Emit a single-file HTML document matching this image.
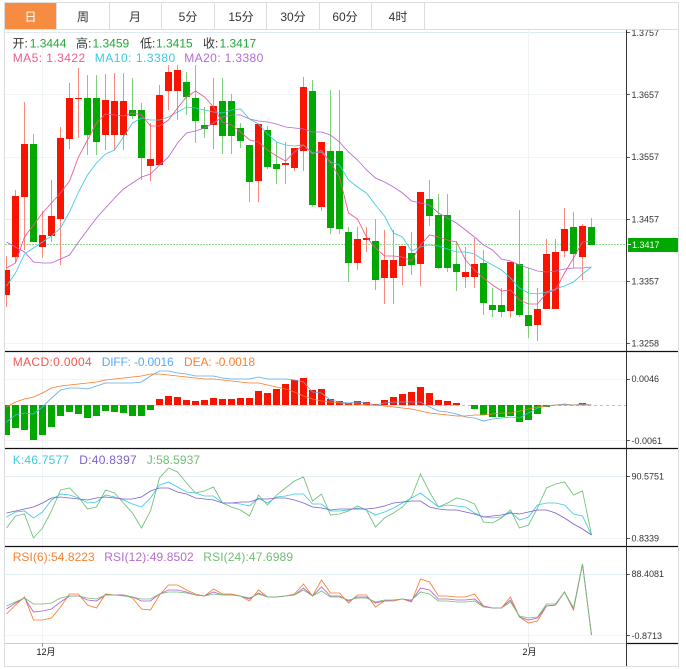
<!DOCTYPE html>
<html><head><meta charset="utf-8"><style>
html,body{margin:0;padding:0;background:#fff;width:686px;height:669px;overflow:hidden}
svg{position:absolute;left:0;top:0;display:block}
text{font-family:"Liberation Sans","Noto Sans CJK SC",sans-serif}
.l{font-size:12px}.a{font-size:9px;fill:#333}
.t{font-size:12px;fill:#333;text-anchor:middle}
polyline{stroke-width:.85}
</style></head><body>
<svg width="686" height="669" viewBox="0 0 686 669" fill="none">
<defs><clipPath id="p"><rect x="5" y="30" width="622" height="320"/></clipPath></defs>
<!-- grid -->
<path d="M5 32.5H626" stroke="#dfeaf1"/>
<path d="M5 94.5H626M5 157.5H626M5 343.5H626M5 379.5H626M5 440.5H626M5 538.5H626M5 635.5H626" stroke="#f0f4f6"/>
<path d="M5 219.5H626M5 281.5H626M5 476.5H626M5 574.5H626" stroke="#e4edf2"/>
<path d="M42.5 30V643M528.5 30V643" stroke="#eef3f5"/>
<path d="M5 405.5H456" stroke="#d8dcdf"/>
<path d="M408 405.5H626" stroke="#9fcbe0" stroke-dasharray="3 3"/>
<!-- current price -->
<path d="M5 244.5H626" stroke="#8fdc8f" stroke-dasharray="2 1"/>
<!-- wicks -->
<g clip-path="url(#p)">
<path stroke="#fa8a80" d="M6.5 256V307M15.5 190V263M24.5 102V250M42.5 211V258M51.5 180V242M60.5 127V265M69.5 83V149M78.5 68V138M105.5 74V150M114.5 73V150M123.5 73V150M150.5 123V181M159.5 85V165M168.5 65V110M177.5 65V120M213.5 78V149M258.5 124V202M285.5 142V184M294.5 148V171M303.5 77V171M321.5 142V211M357.5 227V270M366.5 227V252M384.5 230V304M393.5 230V304M402.5 246V285M420.5 192V286M465.5 247V288M474.5 238V288M510.5 262V318M537.5 288V341M546.5 239V309M555.5 239V309M564.5 208V257M582.5 224V280"/>
<path stroke="#7ed07e" d="M33.5 134V242M87.5 75V155M96.5 75V155M132.5 78V119M141.5 103V180M186.5 72V115M195.5 65V143M204.5 107V138M222.5 78V154M231.5 94V154M240.5 123V148M249.5 145V202M267.5 126V169M276.5 142V184M312.5 80V207M330.5 90V234M339.5 90V234M348.5 227V282M375.5 219V290M411.5 232V275M429.5 180V226M438.5 194V269M447.5 194V272M456.5 241V291M483.5 250V315M492.5 288V317M501.5 288V317M519.5 210V317M528.5 268V338M573.5 212V268M591.5 218V245"/>
<!-- bodies -->
<path fill="#f71400" d="M3 270h7v25h-7zM12 196h7v61h-7zM21 144h7v53h-7zM39 235h7v12h-7zM48 216h7v20h-7zM57 138h7v81h-7zM66 98h7v41h-7zM75 98h7v1h-7zM102 100h7v35h-7zM111 101h7v34h-7zM120 101h7v34h-7zM147 159h7v7h-7zM156 95h7v70h-7zM165 72h7v19h-7zM174 70h7v21h-7zM210 106h7v19h-7zM255 124h7v57h-7zM282 163h7v2h-7zM291 148h7v20h-7zM300 87h7v64h-7zM318 142h7v65h-7zM354 239h7v24h-7zM363 238h7v2h-7zM381 260h7v18h-7zM390 260h7v18h-7zM399 246h7v20h-7zM417 192h7v72h-7zM462 272h7v5h-7zM471 264h7v13h-7zM507 262h7v49h-7zM534 309h7v16h-7zM543 254h7v55h-7zM552 252h7v57h-7zM561 229h7v22h-7zM579 226h7v31h-7z"/>
<path fill="#00a800" d="M30 144h7v98h-7zM84 98h7v37h-7zM93 98h7v44h-7zM129 110h7v6h-7zM138 110h7v48h-7zM183 82h7v15h-7zM192 98h7v23h-7zM201 125h7v4h-7zM219 101h7v35h-7zM228 101h7v35h-7zM237 128h7v13h-7zM246 145h7v37h-7zM264 130h7v37h-7zM273 164h7v5h-7zM309 91h7v114h-7zM327 151h7v77h-7zM336 151h7v78h-7zM345 232h7v31h-7zM372 241h7v39h-7zM408 253h7v12h-7zM426 199h7v17h-7zM435 215h7v53h-7zM444 215h7v53h-7zM453 264h7v8h-7zM480 263h7v40h-7zM489 305h7v5h-7zM498 305h7v7h-7zM516 264h7v51h-7zM525 315h7v11h-7zM570 227h7v27h-7zM588 227h7v18h-7z"/>
<!-- MA lines -->
<g transform="translate(.5 0)">
<polyline stroke="#b666d2" points="6,242 15,247 24,252 33,262 42,263 51,263 60,259 69,255 78,242 87,230 96,218 105,208 114,198 123,189 132,183 141,177 150,174 159,165 168,157 177,143 186,133 195,131 204,128 213,123 222,117 231,115 240,115 249,119 258,121 267,122 276,124 285,127 294,128 303,129 312,132 321,132 330,135 339,142 348,152 357,160 366,170 375,178 384,182 393,187 402,193 411,201 420,203 429,205 438,213 447,218 456,223 465,230 474,237 483,245 492,250 501,259 510,261 519,265 528,268 537,271 546,272 555,271 564,269 573,268 582,268 591,267"/>
<polyline stroke="#3ec9e0" points="6,286 15,273 24,254 33,248 42,242 51,236 60,228 69,212 78,192 87,175 96,163 105,154 114,150 123,137 132,123 141,118 150,120 159,120 168,117 177,112 186,107 195,108 204,110 213,112 222,113 231,110 240,109 249,119 258,124 267,134 276,142 285,145 294,146 303,145 312,153 321,152 330,162 339,165 348,180 357,187 366,193 375,205 384,216 393,233 402,237 411,251 420,247 429,245 438,246 447,249 456,252 465,252 474,254 483,260 492,265 501,270 510,278 519,288 528,293 537,294 546,292 555,289 564,286 573,282 582,274 591,267"/>
<polyline stroke="#f0558a" points="6,268 15,263 24,237 33,225 42,213 51,203 60,193 69,181 78,157 87,140 96,123 105,114 114,115 123,116 132,113 141,115 150,126 159,126 168,120 177,108 186,97 195,91 204,97 213,107 222,122 231,125 240,132 249,140 258,142 267,150 276,156 285,161 294,152 303,145 312,154 321,150 330,163 339,177 348,213 357,219 366,237 375,248 384,256 393,256 402,257 411,261 420,245 429,235 438,237 447,240 456,242 465,260 474,270 483,278 492,285 501,291 510,290 519,300 528,304 537,304 546,293 555,290 564,273 573,258 582,242 591,241"/>
</g>
</g>
<!-- MACD bars -->
<path fill="#00a800" d="M5 405h5v30h-5zM12 405h7v23h-7zM21 405h7v25h-7zM30 405h7v35h-7zM39 405h7v30h-7zM48 405h7v22h-7zM57 405h7v11h-7zM66 405h7v7h-7zM75 405h7v9h-7zM84 405h7v13h-7zM93 405h7v11h-7zM102 405h7v6h-7zM111 405h7v7h-7zM120 405h7v8h-7zM129 405h7v11h-7zM138 405h7v11h-7zM147 405h7v5h-7zM471 405h7v4h-7zM480 405h7v10h-7zM489 405h7v12h-7zM498 405h7v12h-7zM507 405h7v11h-7zM516 405h7v17h-7zM525 405h7v15h-7zM534 405h7v9h-7zM543 405h7v2h-7z"/>
<path fill="#f71400" d="M156 399h7v6h-7zM165 396h7v9h-7zM174 397h7v8h-7zM183 400h7v5h-7zM192 401h7v4h-7zM201 400h7v5h-7zM210 398h7v7h-7zM219 399h7v6h-7zM228 399h7v6h-7zM237 398h7v7h-7zM246 398h7v7h-7zM255 391h7v14h-7zM264 393h7v12h-7zM273 389h7v16h-7zM282 384h7v21h-7zM291 380h7v25h-7zM300 378h7v27h-7zM309 390h7v15h-7zM318 389h7v16h-7zM327 399h7v6h-7zM336 401h7v4h-7zM345 403h7v2h-7zM354 401h7v4h-7zM363 402h7v3h-7zM372 404h7v1h-7zM381 400h7v5h-7zM390 397h7v8h-7zM399 394h7v11h-7zM408 392h7v13h-7zM417 387h7v18h-7zM426 393h7v12h-7zM435 400h7v5h-7zM444 401h7v4h-7zM453 403h7v2h-7zM579 403h7v2h-7z"/>
<g transform="translate(.5 0)">
<polyline stroke="#58aaf0" points="6,422 15,415 24,413 33,414 42,407 51,398 60,390 69,388 78,388 87,389 96,386 105,383 114,383 123,383 132,383 141,382 150,376 159,371 168,371 177,373 186,374 195,376 204,376 213,376 222,378 231,379 240,379 249,379 258,377 267,379 276,379 285,379 294,380 303,382 312,392 321,393 330,400 339,402 348,403 357,402 366,403 375,405 384,403 393,402 402,402 411,402 420,402 429,407 438,411 447,412 456,414 465,417 474,418 483,421 492,419 501,418 510,417 519,418 528,413 537,408 546,406 555,405 564,404 573,405 582,404 591,405"/>
<polyline stroke="#f97a24" points="6,407 15,402 24,399 33,397 42,393 51,388 60,386 69,385 78,384 87,383 96,382 105,380 114,379 123,378 132,377 141,376 150,374 159,374 168,375 177,376 186,377 195,378 204,379 213,379 222,380 231,381 240,382 249,383 258,383 267,385 276,387 285,389 294,392 303,396 312,399 321,401 330,402 339,403 348,404 357,404 366,405 375,405 384,406 393,407 402,408 411,409 420,411 429,413 438,414 447,415 456,416 465,416 474,415 483,415 492,414 501,413 510,413 519,411 528,409 537,407 546,406 555,405 564,405 573,405 582,405 591,405"/>
<!-- KDJ -->
<polyline stroke="#6fbf73" points="6,528 15,516 24,514 33,538 42,528 51,511 60,490 69,488 78,497 87,509 96,507 105,490 114,493 123,503 132,513 141,528 150,511 159,478 168,468 177,472 186,483 195,493 204,491 213,487 222,503 231,507 240,510 249,516 258,495 267,505 276,495 285,488 294,481 303,477 312,501 321,494 330,515 339,514 348,511 357,506 366,510 375,527 384,518 393,513 402,507 411,497 420,474 429,492 438,507 447,503 456,498 465,500 474,504 483,522 492,523 501,518 510,510 519,528 528,525 537,508 546,488 555,484 564,482 573,495 582,491 591,535"/>
<polyline stroke="#3ec9e0" points="6,517 15,512 24,511 33,518 42,512 51,500 60,494 69,495 78,498 87,503 96,502 105,495 114,497 123,500 132,504 141,507 150,498 159,485 168,482 177,487 186,492 195,493 204,496 213,496 222,503 231,503 240,504 249,506 258,498 267,503 276,497 285,496 294,494 303,494 312,504 321,504 330,511 339,511 348,510 357,508 366,510 375,515 384,512 393,508 402,503 411,498 420,493 429,500 438,507 447,505 456,506 465,507 474,513 483,517 492,518 501,517 510,512 519,520 528,517 537,505 546,503 555,503 564,505 573,514 582,516 591,535"/>
<polyline stroke="#7e5fc8" points="6,513 15,511 24,509 33,507 42,503 51,498 60,497 69,498 78,499 87,500 96,498 105,497 114,498 123,499 132,499 141,497 150,491 159,488 168,488 177,492 186,494 195,498 204,499 213,500 222,503 231,503 240,502 249,502 258,499 267,499 276,498 285,498 294,500 303,503 312,507 321,508 330,510 339,509 348,509 357,509 366,509 375,508 384,506 393,503 402,502 411,501 420,501 429,507 438,509 447,510 456,510 465,512 474,514 483,517 492,516 501,515 510,513 519,514 528,512 537,510 546,510 555,513 564,518 573,524 582,529 591,535"/>
<!-- RSI -->
<polyline stroke="#f97a24" points="6,614 15,605 24,597 33,620 42,620 51,618 60,607 69,594 78,594 87,605 96,608 105,594 114,595 123,595 132,598 141,609 150,610 159,595 168,585 177,585 186,590 195,594 204,596 213,589 222,594 231,594 240,596 249,601 258,590 267,597 276,597 285,596 294,594 303,584 312,596 321,580 330,593 339,593 348,603 357,595 366,595 375,607 384,601 393,601 402,599 411,602 420,579 429,582 438,596 447,596 456,597 465,597 474,594 483,606 492,608 501,608 510,597 519,617 528,623 537,621 546,606 555,605 564,592 573,610 582,564 591,635"/>
<polyline stroke="#b55fd0" points="6,609 15,603 24,598 33,612 42,611 51,609 60,602 69,596 78,596 87,600 96,601 105,595 114,595 123,595 132,597 141,601 150,601 159,594 168,590 177,590 186,592 195,595 204,596 213,592 222,595 231,595 240,596 249,599 258,593 267,597 276,597 285,596 294,595 303,588 312,596 321,587 330,596 339,596 348,601 357,597 366,597 375,603 384,601 393,600 402,599 411,601 420,588 429,590 438,599 447,599 456,600 465,600 474,599 483,606 492,608 501,608 510,600 519,617 528,620 537,618 546,606 555,605 564,592 573,609 582,564 591,635"/>
<polyline stroke="#6fbf73" points="6,606 15,602 24,598 33,604 42,604 51,603 60,598 69,596 78,596 87,598 96,599 105,595 114,595 123,596 132,597 141,599 150,599 159,594 168,592 177,592 186,593 195,595 204,596 213,594 222,595 231,595 240,596 249,598 258,594 267,597 276,597 285,596 294,595 303,590 312,596 321,591 330,597 339,597 348,600 357,598 366,598 375,602 384,600 393,600 402,599 411,600 420,592 429,594 438,601 447,601 456,602 465,602 474,601 483,607 492,608 501,608 510,602 519,616 528,618 537,617 546,604 555,604 564,592 573,608 582,564 591,635"/>
</g>
<!-- frame -->
<path d="M5 351.5H678M5 448.5H678M5 546.5H678M626 643.5H678" stroke="#111" stroke-width="1.2"/>
<path d="M5 643.5H626" stroke="#ccc"/>
<path d="M626.5 30V666" stroke="#333"/>
<path d="M4.5 2V666.5H678.5V2" stroke="#ddd"/>
<path d="M42.5 643V647M528.5 643V647" stroke="#999"/>
<path d="M627 32.5H630M627 94.5H630M627 157.5H630M627 219.5H630M627 281.5H630M627 343.5H630M627 379.5H630M627 440.5H630M627 476.5H630M627 538.5H630M627 574.5H630M627 635.5H630" stroke="#555"/>
<!-- axis labels -->
<text class="a" x="631.5" y="36">1.3757</text>
<text class="a" x="631.5" y="98">1.3657</text>
<text class="a" x="631.5" y="160">1.3557</text>
<text class="a" x="631.5" y="222.5">1.3457</text>
<text class="a" x="631.5" y="284.5">1.3357</text>
<text class="a" x="631.5" y="346.5">1.3258</text>
<text class="a" x="631.5" y="382">0.0046</text>
<text class="a" x="631.5" y="444">-0.0061</text>
<text class="a" x="631.5" y="479.5">90.5751</text>
<text class="a" x="631.5" y="541.5">0.8339</text>
<text class="a" x="631.5" y="577">88.4081</text>
<text class="a" x="631.5" y="639">-0.8713</text>
<rect x="628" y="238" width="50" height="14" fill="#00a800"/>
<path d="M628 244.5H631" stroke="#fff"/>
<text x="632" y="248" font-size="9" fill="#fff">1.3417</text>
<text x="36.5" y="655" font-size="9" fill="#111">12月</text>
<text x="522.5" y="655" font-size="9" fill="#111">2月</text>
<!-- tab bar -->
<rect x="5" y="2" width="673" height="28" fill="#fff"/>
<rect x="5" y="3" width="51" height="26" fill="#f58c42"/>
<path d="M5 2.5H678M5 29.5H678M56.5 3V29M109.5 3V29M161.5 3V29M214.5 3V29M266.5 3V29M319.5 3V29M371.5 3V29M424.5 3V29M678.5 2V30M4.5 2V30" stroke="#ddd"/>
<text class="t" x="30.5" y="21" style="fill:#fff">日</text>
<text class="t" x="83" y="21">周</text>
<text class="t" x="135" y="21">月</text>
<text class="t" x="188" y="21">5分</text>
<text class="t" x="241" y="21">15分</text>
<text class="t" x="293" y="21">30分</text>
<text class="t" x="345" y="21">60分</text>
<text class="t" x="398" y="21">4时</text>
<!-- legends -->
<text class="l" x="12.5" y="47.5" fill="#333">开:</text><text class="l" x="29.7" y="47.5" fill="#22a63a">1.3444</text>
<text class="l" x="76" y="47.5" fill="#333">高:</text><text class="l" x="92.5" y="47.5" fill="#22a63a">1.3459</text>
<text class="l" x="140" y="47.5" fill="#333">低:</text><text class="l" x="156" y="47.5" fill="#22a63a">1.3415</text>
<text class="l" x="203" y="47.5" fill="#333">收:</text><text class="l" x="219.5" y="47.5" fill="#22a63a">1.3417</text>
<text class="l" x="12.7" y="62" fill="#ef5b8c" textLength="72.5" lengthAdjust="spacing">MA5: 1.3422</text>
<text class="l" x="94.7" y="62" fill="#3ec9e0" textLength="80.5" lengthAdjust="spacing">MA10: 1.3380</text>
<text class="l" x="184.3" y="62" fill="#b56bd0" textLength="79" lengthAdjust="spacing">MA20: 1.3380</text>
<text class="l" x="12.7" y="366" fill="#f4564e" textLength="79" lengthAdjust="spacing">MACD:0.0004</text>
<text class="l" x="101.7" y="366" fill="#58aaf0" textLength="72" lengthAdjust="spacing">DIFF: -0.0016</text>
<text class="l" x="184" y="366" fill="#f98232" textLength="71" lengthAdjust="spacing">DEA: -0.0018</text>
<text class="l" x="12.7" y="464" fill="#3ec9e0" textLength="56.3" lengthAdjust="spacing">K:46.7577</text>
<text class="l" x="79.3" y="464" fill="#7e5fc8" textLength="57.4" lengthAdjust="spacing">D:40.8397</text>
<text class="l" x="146.7" y="464" fill="#6fbf73" textLength="53.3" lengthAdjust="spacing">J:58.5937</text>
<text class="l" x="12.7" y="561" fill="#f98232" textLength="82" lengthAdjust="spacing">RSI(6):54.8223</text>
<text class="l" x="104.3" y="561" fill="#b56bd0" textLength="89.4" lengthAdjust="spacing">RSI(12):49.8502</text>
<text class="l" x="203.3" y="561" fill="#6fbf73" textLength="89.7" lengthAdjust="spacing">RSI(24):47.6989</text>
</svg>
</body></html>
